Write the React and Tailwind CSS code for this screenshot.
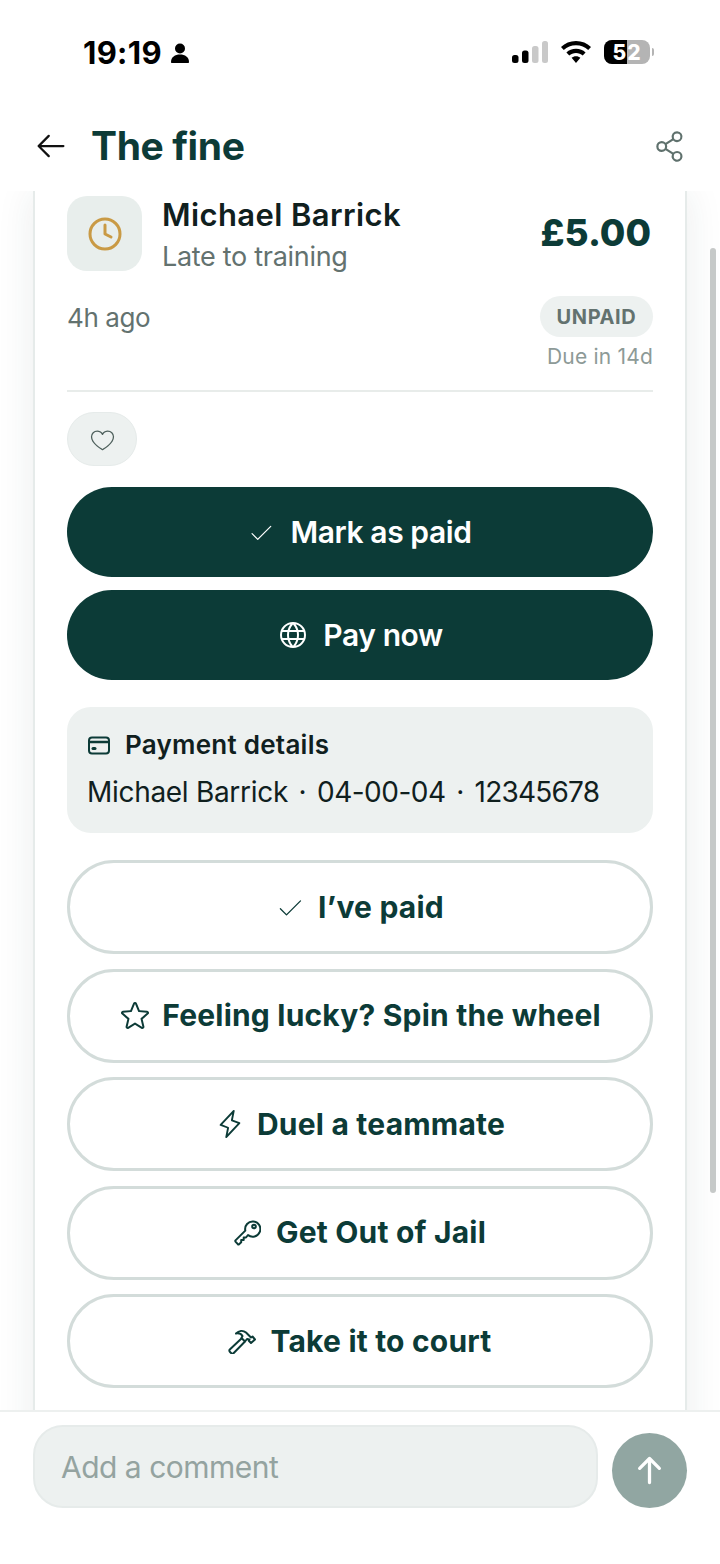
import React from 'react';
import { Clock } from 'lucide-react';
import {
  PiArrowLeft,
  PiArrowUpBold,
  PiCheckLight,
  PiGlobe,
  PiHeartLight,
  PiLightning,
  PiShareNetwork,
  PiStar,
} from 'react-icons/pi';

const font = { fontFamily: 'Inter, "Liberation Sans", sans-serif' };

const CardIcon = () => (
  <svg width="24" height="19" viewBox="0 0 24 19" fill="none" stroke="#0c3b37" strokeWidth="2">
    <rect x="2" y="1.500" width="20" height="16" rx="3" />
    <path d="M2 6h20" strokeWidth="2.500" />
    <rect x="4.500" y="11" width="5" height="3" rx="1.500" fill="#0c3b37" stroke="none" />
  </svg>
);

const KeyIcon = () => (
  <svg width="27" height="26" viewBox="0 0 27 26" fill="none" stroke="#0c3b37" strokeWidth="2" strokeLinejoin="round">
    <path d="M11.300 10.600 L1.500 20.400 a1 1 0 0 0 0 1.200 L3.800 24.200 a1 1 0 0 0 1.300 0 L7.200 22.300 V20 H9.700 V17.500 H12 L14 15 A7.600 7.600 0 1 0 11.300 10.600z" />
    <circle cx="20" cy="6.500" r="1.800" />
  </svg>
);

const HammerIcon = () => (
  <svg width="28" height="25" viewBox="0 0 28 25" fill="none" stroke="#0c3b37" strokeWidth="2" strokeLinejoin="round">
    <path d="M14 9 L1.800 20.500 a1.500 1.500 0 0 0 0 2.200 l1.500 1.500 a1.500 1.500 0 0 0 2.200 0 L17 12.500" />
    <path d="M8 4.500 C11 1.500 15 1 18 3.500 L23 8.500 L24.500 7.500 L27 10.500 L23 14 L20.800 11.700 L21.500 10.500 L19 10 L17 12.500 L13.500 9 L14.500 7 C13 4.500 11 4 8 4.500z" />
  </svg>
);

const outlineActions = [
  { label: 'I’ve paid', icon: <PiCheckLight size={28} />, gap: 'gap-[14px]' },
  { label: 'Feeling lucky? Spin the wheel', icon: <PiStar size={32} />, gap: 'gap-[11px]' },
  { label: 'Duel a teammate', icon: <PiLightning size={30} />, gap: 'gap-[12px]' },
  { label: 'Get Out of Jail', icon: <KeyIcon />, gap: 'gap-[15px]' },
  { label: 'Take it to court', icon: <HammerIcon />, gap: 'gap-[14px]' },
];

const StatusBar = () => (
  <div className="flex h-[100px] shrink-0 items-start justify-between pl-[83px] pr-[66px] pt-[35px]">
    <div className="flex items-center gap-[8px]">
      <span className="text-[31px] font-bold leading-[36px] tracking-[0.3px] text-black">19:19</span>
      <svg width="20" height="22" viewBox="0 0 20 22">
        <circle cx="10" cy="6.500" r="5" fill="#000" />
        <path d="M1 20c0-5 4-7.500 9-7.500s9 2.500 9 7.500c0 .6-.4 1-1 1H2c-.6 0-1-.4-1-1z" fill="#000" />
      </svg>
    </div>
    <div className="flex items-center gap-[12px] pt-[5px]">
      <svg width="36" height="22" viewBox="0 0 36 22">
        <rect x="0" y="14" width="6.500" height="8" rx="2.500" fill="#000" />
        <rect x="10" y="9.500" width="6.500" height="12.500" rx="2.500" fill="#000" />
        <rect x="20" y="5" width="6.500" height="17" rx="2.500" fill="#c9c9c9" />
        <rect x="30" y="0" width="6" height="22" rx="2.500" fill="#c9c9c9" />
      </svg>
      <svg width="32" height="24" viewBox="0 0 32 24">
        <path d="M16 1c6 0 11 2.200 15 6l-2.800 3C25 7 20.800 5.300 16 5.300S7 7 3.800 10L1 7c4-3.800 9-6 15-6z" fill="#000" />
        <path d="M16 8.700c3.800 0 7 1.300 9.600 3.700l-2.900 3c-1.800-1.600-4-2.500-6.700-2.500s-4.900.9-6.700 2.500l-2.900-3C9 10 12.200 8.700 16 8.700z" fill="#000" />
        <path d="M16 16.200c1.800 0 3.300.6 4.400 1.600L16 23l-4.400-5.200c1.100-1 2.600-1.600 4.400-1.600z" fill="#000" />
      </svg>
      <div className="relative flex items-center">
        <div className="relative flex h-[24px] w-[46px] overflow-hidden rounded-[8px] bg-[#b4b4b4]">
          <div className="h-full w-[23px] bg-black" />
          <span className="absolute inset-0 flex items-center justify-center text-[21px] font-extrabold leading-none tracking-[1px] text-white">
            52
          </span>
        </div>
        <div className="ml-[2px] h-[8px] w-[2px] rounded-r-full bg-[#b4b4b4]" />
      </div>
    </div>
  </div>
);

const Header = () => (
  <div className="flex h-[91px] shrink-0 items-start justify-between pl-[33px] pr-[32px] pt-[24px]">
    <div className="flex items-center gap-[22px]">
      <PiArrowLeft size={36} color="#111" />
      <h1 className="text-[39px] font-bold leading-[44px] tracking-[-0.4px] text-[#0c3b37]">The fine</h1>
    </div>
    <PiShareNetwork size={35} color="#5f716d" className="mt-[5px]" />
  </div>
);

const FineSummary = () => (
  <div className="flex items-start">
    <div className="flex h-[75px] w-[75px] shrink-0 items-center justify-center rounded-[20px] bg-[#e8eeec]">
      <Clock size={36} color="#c99a45" strokeWidth={2} />
    </div>
    <div className="ml-[20px] flex-1">
      <div className="text-[31px] font-semibold leading-[38px] tracking-[0.4px] text-[#10201e]">Michael Barrick</div>
      <div className="mt-[6px] text-[27px] leading-[34px] tracking-[-0.3px] text-[#63726f]">Late to training</div>
    </div>
    <div className="mt-[14px] mr-[2px] text-[37px] font-extrabold leading-[46px] text-[#0c3b37]">£5.00</div>
  </div>
);

const StatusRow = () => (
  <div className="mt-[22px] flex items-start justify-between">
    <span className="mt-[6px] text-[26px] leading-[32px] tracking-[-0.4px] text-[#63726f]">4h ago</span>
    <div className="flex flex-col items-end">
      <span className="flex h-[41px] w-[113px] items-center justify-center rounded-full bg-[#edf1f0] text-[20px] font-bold tracking-[0.6px] text-[#63726f]">
        UNPAID
      </span>
      <span className="mt-[6px] text-[21px] leading-[28px] tracking-[0.2px] text-[#8d9a97]">Due in 14d</span>
    </div>
  </div>
);

const SolidButton = ({ icon, gap, label }) => (
  <button className={`flex h-[90px] w-full items-center justify-center rounded-[45px] bg-[#0c3b37] text-[30px] font-semibold tracking-[-0.4px] text-white ${gap}`}>
    {icon}
    {label}
  </button>
);

const OutlineButton = ({ icon, gap, label }) => (
  <button className={`flex h-[94px] w-full items-center justify-center rounded-[47px] border-[3px] border-[#d3dcda] bg-white text-[30px] font-bold tracking-[0.2px] text-[#0c3b37] ${gap}`}>
    {icon}
    {label}
  </button>
);

const Dot = () => <span className="inline-block w-[29px] text-center">·</span>;

const PaymentDetails = () => (
  <div className="mt-[27px] h-[126px] rounded-[24px] bg-[#edf1f0] pl-[20px] pt-[22px]">
    <div className="flex items-center gap-[14px]">
      <CardIcon />
      <span className="text-[26px] font-semibold leading-[32px] tracking-[0.25px] text-[#10201e]">Payment details</span>
    </div>
    <div className="mt-[14px] text-[28px] leading-[34px] tracking-[-0.3px] text-[#10201e]">
      Michael Barrick
      <Dot />
      <span className="tracking-[-0.5px]">04-00-04</span>
      <Dot />
      <span className="tracking-[-0.8px]">12345678</span>
    </div>
  </div>
);

const Footer = () => (
  <div className="flex h-[154px] shrink-0 items-start border-t-2 border-[#edf0ef] bg-white pl-[33px] pr-[33px] pt-[13px]">
    <div className="flex h-[83px] w-[565px] items-center rounded-[30px] border-2 border-[#e6ebea] bg-[#edf1f0] pl-[26px] pt-[2px] text-[30px] tracking-[-0.5px] text-[#94a3a0]">
      Add a comment
    </div>
    <button className="ml-[14px] mt-[8px] flex h-[75px] w-[75px] items-center justify-center rounded-full bg-[#91a6a2]">
      <PiArrowUpBold size={35} color="#fff" />
    </button>
  </div>
);

export default function App() {
  return (
    <div className="flex h-[1564px] w-[720px] flex-col overflow-hidden bg-white" style={font}>
      <StatusBar />
      <Header />
      <div className="relative min-h-0 flex-1 overflow-hidden px-[33px]">
        <div className="h-[1400px] border-x-2 border-[#e6ebea] bg-white px-[32px] pt-[5px] shadow-[0_0_36px_rgba(30,60,55,0.09)]">
          <FineSummary />
          <StatusRow />
          <div className="mt-[19px] h-[2px] bg-[#e8ecea]" />
          <button className="mt-[20px] flex h-[54px] w-[70px] items-center justify-center rounded-[27px] border border-[#e6ebea] bg-[#edf1f0]">
            <PiHeartLight size={27} color="#4d5f5b" />
          </button>
          <div className="mt-[21px] flex flex-col gap-[13px]">
            <SolidButton icon={<PiCheckLight size={26} />} gap="gap-[16px]" label="Mark as paid" />
            <SolidButton icon={<PiGlobe size={32} />} gap="gap-[14px]" label="Pay now" />
          </div>
          <PaymentDetails />
          <div className="mt-[27px] flex flex-col gap-[14.5px]">
            {outlineActions.map((a) => (
              <OutlineButton key={a.label} {...a} />
            ))}
          </div>
        </div>
        {/* scroll indicator */}
        <div className="absolute right-[4px] top-[57px] h-[945px] w-[6px] rounded-full bg-[#c6c9c8]" />
      </div>
      <Footer />
    </div>
  );
}
